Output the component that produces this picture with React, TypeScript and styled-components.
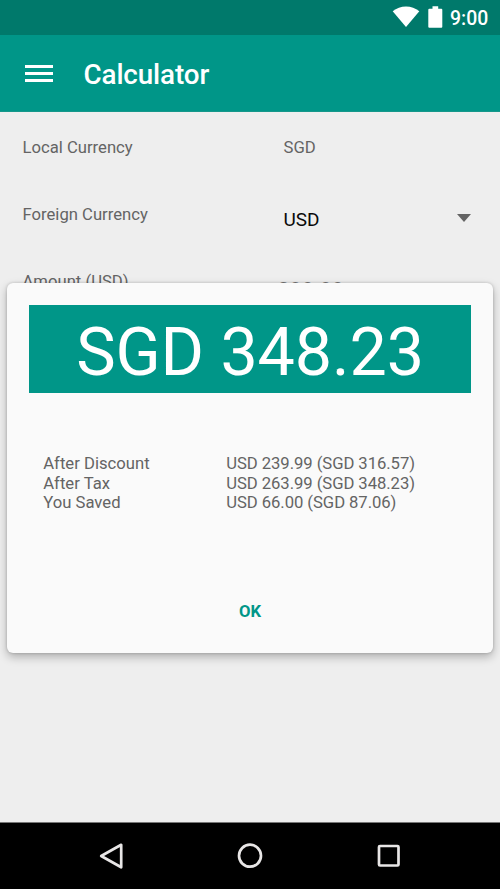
import React from "react";
import styled, { createGlobalStyle } from "styled-components";

const teal = "#009688";

const GlobalStyle = createGlobalStyle`
  * { box-sizing: border-box; }
  body { margin: 0; }
`;

const Screen = styled.div`
  position: relative;
  display: flex;
  flex-direction: column;
  width: 500px;
  height: 889px;
  overflow: hidden;
  background: #eeeeee;
  color: #646464;
  font-family: Roboto, "Liberation Sans", sans-serif;
  font-size: 16.67px;
  line-height: 19.5px;
`;

const StatusBar = styled.header`
  display: flex;
  align-items: center;
  flex: 0 0 35px;
  padding-left: 392px;
  background: #00796b;
`;

const Clock = styled.span`
  margin-left: 7px;
  padding-top: 2px;
  color: #fff;
  font-size: 19.4px;
  font-weight: 500;
`;

const StatusIcons = styled.svg`
  flex: none;
  width: 51px;
  height: 35px;
`;

const AppBar = styled.div`
  display: flex;
  align-items: center;
  flex: 0 0 77px;
  padding-left: 25px;
  background: ${teal};
  border-bottom: 1px solid #16978a;
`;

const MenuIcon = styled.svg`
  width: 28px;
  height: 20px;
  margin-top: 1px;
`;

const Title = styled.h1`
  margin: 4px 0 0 30.5px;
  color: #fff;
  font-size: 27.8px;
  font-weight: 500;
  letter-spacing: -0.12px;
  line-height: 34px;
`;

const Form = styled.main`
  flex: 1;
  padding-top: 26px;
`;

const FormRow = styled.div`
  display: grid;
  grid-template-columns: 261px 187.5px;
  height: 67px;
  padding-left: 22.5px;
`;

const Spinner = styled.div`
  display: flex;
  align-items: center;
  justify-content: space-between;
  height: 20px;
  margin-top: 5px;
  color: #0a0a0a;
  font-size: 19px;
`;

const Arrow = styled.svg`
  width: 14px;
  height: 8px;
  margin-top: -4px;
`;

const Amount = styled.span`
  margin: 9px 0 0 -6px;
  color: #777;
  font-size: 21.3px;
  font-weight: 500;
`;

const Dialog = styled.section`
  position: absolute;
  top: 282.5px;
  left: 7px;
  width: 486px;
  height: 370px;
  display: flex;
  flex-direction: column;
  align-items: center;
  padding-top: 22.5px;
  border-radius: 6px;
  background: #fafafa;
  box-shadow: 0 4px 10px rgba(0, 0, 0, 0.27), 0 0 3px rgba(0, 0, 0, 0.2);
`;

const Total = styled.div`
  width: 442px;
  height: 88px;
  padding-top: 5px;
  background: ${teal};
  color: #fff;
  font-size: 66.4px;
  letter-spacing: -0.1px;
  line-height: 84px;
  text-align: center;
  white-space: nowrap;
`;

const Details = styled.dl`
  display: grid;
  grid-template-columns: 183px 1fr;
  width: 413.5px;
  height: 59px;
  margin: 61px 0 0;
`;

const DetailLabel = styled.dt`
  white-space: nowrap;
`;

const DetailValue = styled.dd`
  margin: 0;
  letter-spacing: -0.06px;
  white-space: nowrap;
`;

const OkButton = styled.button`
  margin-top: 79px;
  padding: 10px 20px;
  border: 0;
  background: none;
  color: ${teal};
  font: 700 16.67px/20px Roboto, sans-serif;
`;

const NavBar = styled.footer`
  display: flex;
  align-items: center;
  flex: 0 0 67px;
  justify-content: space-between;
  padding: 0 97.5px;
  background: #000;
  border-top: 1px solid #777;
`;

const NavIcon = styled.svg`
  width: 28px;
  height: 28px;
  fill: none;
  stroke: #e8e6e6;
  stroke-width: 2.7;
  stroke-linejoin: round;
`;

const results = [
  ["After Discount", "USD 239.99 (SGD 316.57)"],
  ["After Tax", "USD 263.99 (SGD 348.23)"],
  ["You Saved", "USD 66.00 (SGD 87.06)"],
];

export default function App() {
  return (
    <>
      <GlobalStyle />
      <Screen>
        <StatusBar>
          <StatusIcons viewBox="0 0 51 35" fill="#fff">
            <path d="M14 27 .7 11.200Q6.500 6.400 14 6.400T27.300 11.200Z" />
            <path d="M40.500 8.700V6.300h5.700v2.400h3.100q1 0 1 1v17q0 1-1 1H37.300q-1 0-1-1V9.700q0-1 1-1Z" />
          </StatusIcons>
          <Clock>9:00</Clock>
        </StatusBar>
        <AppBar>
          <MenuIcon viewBox="0 0 28 20" fill="#fff">
            <path d="M0 1h28v3H0zM0 8h28v3H0zM0 15h28v3H0z" />
          </MenuIcon>
          <Title>Calculator</Title>
        </AppBar>
        <Form>
          <FormRow><span>Local Currency</span><span>SGD</span></FormRow>
          <FormRow>
            <span>Foreign Currency</span>
            <Spinner>
              USD
              <Arrow viewBox="0 0 14 8"><path d="M0 0h14L7 8z" fill="#646464" /></Arrow>
            </Spinner>
          </FormRow>
          <FormRow><span>Amount (USD)</span><Amount>299.99</Amount></FormRow>
        </Form>
        <NavBar>
          <NavIcon viewBox="0 0 28 28"><path d="M23.200 2.800v22.500L3.200 14Z" /></NavIcon>
          <NavIcon viewBox="0 0 28 28"><circle cx="14" cy="13.700" r="11" /></NavIcon>
          <NavIcon viewBox="0 0 28 28"><rect x="4" y="4" width="19.500" height="19.500" rx="1" /></NavIcon>
        </NavBar>
        <Dialog role="dialog">
          <Total>SGD 348.23</Total>
          <Details>
            {results.map(([label, value]) => (
              <React.Fragment key={label}>
                <DetailLabel>{label}</DetailLabel>
                <DetailValue>{value}</DetailValue>
              </React.Fragment>
            ))}
          </Details>
          <OkButton>OK</OkButton>
        </Dialog>
      </Screen>
    </>
  );
}
